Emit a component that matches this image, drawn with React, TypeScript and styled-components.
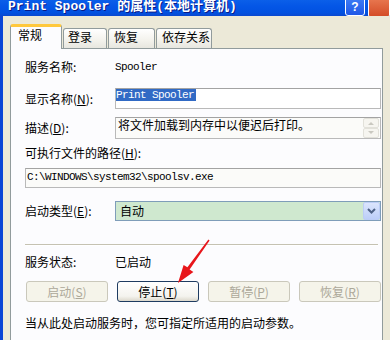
import styled, { createGlobalStyle } from "styled-components";

const CJK = `"Noto Sans CJK SC", "Noto Sans", sans-serif`;
const MONO = `"Liberation Mono", "Noto Sans CJK SC", monospace`;

const GlobalStyle = createGlobalStyle`
  html, body {
    margin: 0;
    padding: 0;
  }
  body {
    width: 390px;
    height: 340px;
    overflow: hidden;
    font-family: ${CJK};
    font-size: 12px;
    color: #000;
  }
`;

const Window = styled.div`
  position: relative;
  width: 390px;
  height: 340px;
  display: flex;
  flex-direction: column;
  overflow: hidden;
  background: #ece9d8;
`;

const TitleBar = styled.div`
  height: 16px;
  flex-shrink: 0;
  display: flex;
  align-items: flex-start;
  padding-left: 8px;
  overflow: hidden;
  background: linear-gradient(to bottom, #0b5fe9 0%, #0456e6 40%, #0251e0 80%, #0a48cf 100%);
`;

const TitleText = styled.div`
  flex: 1;
  font-family: ${MONO};
  font-weight: bold;
  font-size: 13px;
  line-height: 14px;
  color: #fff;
  white-space: nowrap;
  text-shadow: 1px 1px 0 #0a1a86;
`;

const HelpButton = styled.div`
  box-sizing: border-box;
  width: 20px;
  height: 19px;
  margin-top: -3px;
  border: 1px solid #fff;
  border-radius: 3px;
  background: linear-gradient(to bottom, #3f7ef6, #2058e6);
  color: #fff;
  font-family: "Liberation Sans", sans-serif;
  font-weight: bold;
  font-size: 12px;
  line-height: 18px;
  text-align: center;
`;

const CloseButton = styled.div`
  flex-shrink: 0;
  width: 20px;
  height: 19px;
  margin-top: -3px;
  margin-left: 3px;
  border: 1px solid #fff;
  border-radius: 3px;
  background: linear-gradient(to bottom, #e97a52, #d34a25);
`;

const Frame = styled.div`
  flex: 1;
  display: flex;
  flex-direction: column;
  min-height: 0;
  border-left: 3px solid #0a45d6;
  padding: 8px 7px 0 7px;
`;

const TabRow = styled.div`
  display: flex;
  align-items: flex-end;
  gap: 1px;
  height: 24px;
  flex-shrink: 0;
`;

const Tab = styled.div<{ $active?: boolean; $w: number; $pl: number }>`
  box-sizing: border-box;
  position: relative;
  z-index: ${(p) => (p.$active ? 2 : 1)};
  width: ${(p) => p.$w}px;
  height: ${(p) => (p.$active ? 25 : 20)}px;
  margin-bottom: ${(p) => (p.$active ? -1 : 0)}px;
  padding-left: ${(p) => p.$pl}px;
  padding-top: 1px;
  border: 1px solid #919b9c;
  border-bottom: none;
  border-top: ${(p) => (p.$active ? "3px solid #ffc83c" : "1px solid #919b9c")};
  border-radius: 3px 3px 0 0;
  background: ${(p) =>
    p.$active ? "#fcfcfe" : "linear-gradient(to bottom, #ffffff, #f3f2ec 60%, #e7e6df)"};
  font-size: 12px;
  line-height: 14px;
  white-space: nowrap;
`;

const Panel = styled.div`
  flex: 1;
  display: flex;
  flex-direction: column;
  border: 1px solid #919b9c;
  border-bottom: none;
  background: #fcfcfe;
  padding: 11px 1px 0 14px;
`;

const Row = styled.div<{ $mt?: number }>`
  display: flex;
  align-items: center;
  margin-top: ${(p) => p.$mt ?? 0}px;
`;

const Label = styled.div<{ $w?: number }>`
  width: ${(p) => (p.$w ? `${p.$w}px` : "auto")};
  flex-shrink: 0;
  line-height: 14px;
  white-space: nowrap;
`;

const Key = styled.span`
  text-decoration: underline;
  text-underline-offset: 1px;
`;

const Mono = styled.span`
  font-family: ${MONO};
  font-size: 11px;
  letter-spacing: -0.6px;
  line-height: 12px;
  white-space: nowrap;
`;

const TextField = styled.div<{ $h: number; $bg?: string }>`
  box-sizing: border-box;
  flex: 1;
  height: ${(p) => p.$h}px;
  display: flex;
  border: 1px solid #b9b9b9;
  border-top-color: #a3a3a3;
  background: ${(p) => p.$bg ?? "#ffffff"};
`;

const Selected = styled(Mono)`
  align-self: flex-start;
  display: inline-block;
  height: 12px;
  padding-right: 2px;
  background: #316ac5;
  color: #fff;
`;

const DescText = styled.div`
  flex: 1;
  padding: 0 2px;
  line-height: 14px;
  white-space: nowrap;
`;

const Scroller = styled.div`
  display: flex;
  flex-direction: column;
  width: 16px;
  margin: 0 1px 0 0;
`;

const ScrollBtn = styled.div`
  box-sizing: border-box;
  height: 10px;
  display: flex;
  align-items: center;
  justify-content: center;
  border: 1px solid #e2e1da;
  border-radius: 2px;
  background: #f6f5f0;
`;

const PathField = styled(TextField)`
  flex: none;
  margin-top: 8px;
  align-items: center;
  padding: 0 0 3px 1px;
`;

const Select = styled.div`
  box-sizing: border-box;
  flex: 1;
  height: 20px;
  display: flex;
  align-items: center;
  border: 1px solid #7f9db9;
  background: #cfe8cf;
  padding-left: 4px;
`;

const SelectText = styled.div`
  flex: 1;
  line-height: 14px;
`;

const DropButton = styled.div`
  box-sizing: border-box;
  width: 17px;
  height: 18px;
  display: flex;
  align-items: center;
  justify-content: center;
  border: 1px solid #bccdf6;
  border-radius: 2px;
  background: linear-gradient(to bottom, #dbe5fd, #bccef8);
`;

const Separator = styled.div`
  height: 1px;
  margin: 23px 3px 0 0;
  background: #c5c2b2;
  border-bottom: 1px solid #ffffff;
`;

const ButtonRow = styled.div`
  display: grid;
  grid-template-columns: repeat(4, 1fr);
  gap: 9px;
  margin: 12px 0 0 1px;
`;

const Button = styled.div<{ $disabled?: boolean }>`
  box-sizing: border-box;
  height: 21px;
  display: flex;
  align-items: center;
  justify-content: center;
  border: 1px solid ${(p) => (p.$disabled ? "#cac8bb" : "#1f3c61")};
  border-radius: 3px;
  background: ${(p) =>
    p.$disabled ? "#f5f4ea" : "linear-gradient(to bottom, #ffffff, #f4f3ee 75%, #dcd8cc)"};
  color: ${(p) => (p.$disabled ? "#aca899" : "#000")};
  line-height: 14px;
`;

const Note = styled.div`
  margin-top: 14px;
  line-height: 14px;
  white-space: nowrap;
`;

const Overlay = styled.svg`
  position: absolute;
  left: 0;
  top: 0;
  pointer-events: none;
`;

const Arrow = () => (
  <Overlay width={390} height={340} viewBox="0 0 390 340">
    <polygon
      points="209.6,240.4 208.4,239.6 187.4,267.2 183.6,264.9 178,283 193.4,271.9 189.6,269.4"
      fill="#e8161b"
    />
  </Overlay>
);

const Chevron = () => (
  <svg width="9" height="6" viewBox="0 0 9 6">
    <path d="M1 1 L4.5 4.5 L8 1" fill="none" stroke="#4d6185" strokeWidth="2" />
  </svg>
);

const Tiny = ({ up }: { up?: boolean }) => (
  <svg width="6" height="4" viewBox="0 0 6 4">
    <path d={up ? "M0 4 L3 1 L6 4Z" : "M0 0 L3 3 L6 0Z"} fill="#c9c8c0" />
  </svg>
);

const tabs = [
  { name: "常规", w: 52, pl: 7, active: true },
  { name: "登录", w: 44, pl: 4 },
  { name: "恢复", w: 47, pl: 5 },
  { name: "依存关系", w: 56, pl: 5 },
];

const buttons = [
  { label: "启动", key: "S", disabled: true },
  { label: "停止", key: "T" },
  { label: "暂停", key: "P", disabled: true },
  { label: "恢复", key: "R", disabled: true },
];

export default function App() {
  return (
    <>
      <GlobalStyle />
      <Window>
        <TitleBar>
          <TitleText>Print Spooler 的属性(本地计算机)</TitleText>
          <HelpButton>?</HelpButton>
          <CloseButton />
        </TitleBar>
        <Frame>
          <TabRow>
            {tabs.map((t) => (
              <Tab key={t.name} $active={t.active} $w={t.w} $pl={t.pl}>
                {t.name}
              </Tab>
            ))}
          </TabRow>
          <Panel>
            <Row>
              <Label $w={90}>服务名称:</Label>
              <Mono>Spooler</Mono>
            </Row>
            <Row $mt={14}>
              <Label $w={90}>
                显示名称(<Key>N</Key>):
              </Label>
              <TextField $h={21}>
                <Selected>Print Spooler</Selected>
              </TextField>
            </Row>
            <Row $mt={8}>
              <Label $w={90}>
                描述(<Key>D</Key>):
              </Label>
              <TextField $h={22} $bg="#fbfbf9">
                <DescText>将文件加载到内存中以便迟后打印。</DescText>
                <Scroller>
                  <ScrollBtn>
                    <Tiny up />
                  </ScrollBtn>
                  <ScrollBtn>
                    <Tiny />
                  </ScrollBtn>
                </Scroller>
              </TextField>
            </Row>
            <Row $mt={7}>
              <Label>
                可执行文件的路径(<Key>H</Key>):
              </Label>
            </Row>
            <PathField $h={20} $bg="#fbfbf9">
              <Mono>C:\WINDOWS\system32\spoolsv.exe</Mono>
            </PathField>
            <Row $mt={13}>
              <Label $w={90}>
                启动类型(<Key>E</Key>):
              </Label>
              <Select>
                <SelectText>自动</SelectText>
                <DropButton>
                  <Chevron />
                </DropButton>
              </Select>
            </Row>
            <Separator />
            <Row $mt={9}>
              <Label $w={90}>服务状态:</Label>
              <Label>已启动</Label>
            </Row>
            <ButtonRow>
              {buttons.map((b) => (
                <Button key={b.key} $disabled={b.disabled}>
                  {b.label}(<Key>{b.key}</Key>)
                </Button>
              ))}
            </ButtonRow>
            <Note>当从此处启动服务时，您可指定所适用的启动参数。</Note>
          </Panel>
        </Frame>
        <Arrow />
      </Window>
    </>
  );
}
